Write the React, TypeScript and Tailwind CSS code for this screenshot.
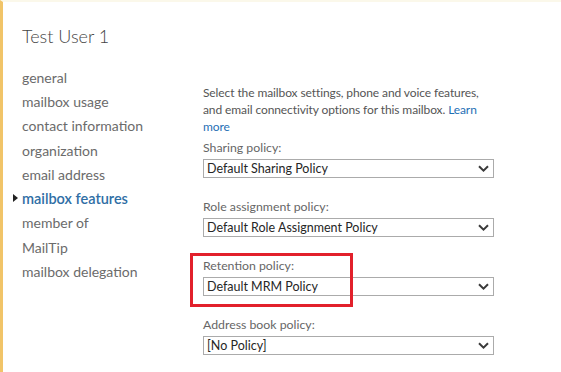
import React from "react";

const navItems = [
  "general",
  "mailbox usage",
  "contact information",
  "organization",
  "email address",
  "mailbox features",
  "member of",
  "MailTip",
  "mailbox delegation",
];

const policies = [
  { label: "Sharing policy:", value: "Default Sharing Policy" },
  { label: "Role assignment policy:", value: "Default Role Assignment Policy" },
  { label: "Retention policy:", value: "Default MRM Policy" },
  { label: "Address book policy:", value: "[No Policy]" },
];

function Chevron() {
  return (
    <svg aria-hidden="true" className="h-[7px] w-[11px]" viewBox="0 0 11 7" fill="none">
      <path d="M1 1.2 5.5 5.6 10 1.2" stroke="#3a3a3a" strokeWidth="2" />
    </svg>
  );
}

function PolicySelect({ label, value }: { label: string; value: string }) {
  return (
    <div className="flex flex-col gap-[3px]">
      <span className="h-4 text-[12.3px] leading-4 text-[#666]">{label}</span>
      <div className="flex h-[19px] items-center justify-between border border-[#ababab] bg-white pl-[3px] pr-[4px]">
        <span className="text-[12.5px] leading-4 text-[#262626]">{value}</span>
        <Chevron />
      </div>
    </div>
  );
}

export default function App() {
  return (
    <div
      className="relative h-[372px] w-[561px] overflow-hidden border-l-[3px] border-t-2 border-l-[#f1c468] border-t-[#fbf8ea] bg-white"
      style={{ fontFamily: 'Lato, "Open Sans", sans-serif' }}
    >
      <div className="flex">
        <div className="w-[200px] pl-[19px] pt-[22px]">
          <h1 className="h-6 text-[18px] font-light leading-6 text-[#444]">Test User 1</h1>
          <ul className="mt-[17px] flex flex-col">
            {navItems.map((item) =>
              item === "mailbox features" ? (
                <li key={item} className="relative flex h-[24.3px] items-center text-[14.5px] font-semibold text-[#2f6ea5]">
                  <span className="absolute -left-[9px] top-[8px] h-0 w-0 border-y-[4px] border-l-[5px] border-y-transparent border-l-[#222]" />
                  {item}
                </li>
              ) : (
                <li key={item} className="flex h-[24.3px] items-center text-[14px] text-[#6b6b6b]">
                  {item}
                </li>
              )
            )}
          </ul>
        </div>

        <div className="w-[291px] pt-[82px]">
          <p className="whitespace-nowrap text-[12px] leading-[17px] tracking-[-0.1px] text-[#555]">
            Select the mailbox settings, phone and voice features,
            <br />
            and email connectivity options for this mailbox. <span className="text-[#1f6fb5]">Learn</span>
            <br />
            <span className="text-[#1f6fb5]">more</span>
          </p>
          <div className="mt-[5px] flex flex-col gap-[21px]">
            {policies.map((p) => (
              <PolicySelect key={p.label} label={p.label} value={p.value} />
            ))}
          </div>
        </div>
      </div>

      <div className="absolute left-[187px] top-[251px] h-[54px] w-[163px] border-[3px] border-[#e2202b]" />
    </div>
  );
}
